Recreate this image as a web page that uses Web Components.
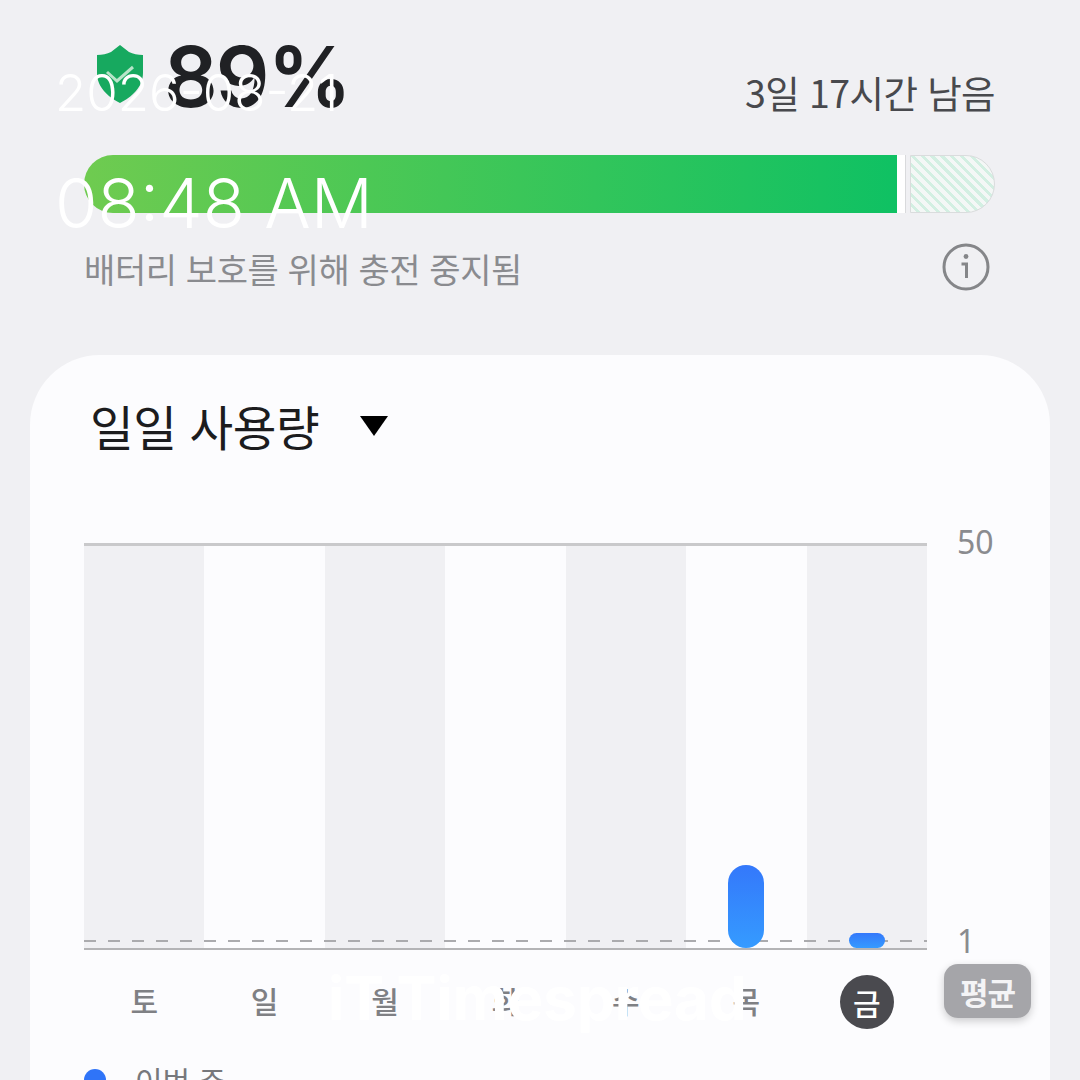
<!DOCTYPE html>
<html lang="ko">
<head>
<meta charset="utf-8">
<title>배터리</title>
<style>
  html, body { margin: 0; height: 100%; }
  body {
    width: 1080px;
    height: 1080px;
    overflow: hidden;
    background: #f0f0f3;
    font-family: "Noto Sans CJK KR", "Noto Sans", sans-serif;
    position: relative;
  }
</style>
</head>
<body>
  <battery-summary percent="89" remaining="3일 17시간 남음" note="배터리 보호를 위해 충전 중지됨"></battery-summary>
  <usage-card title="일일 사용량"></usage-card>
  <stamp-overlay date="2026-08-21" time="08:48 AM" mark="iT Timespread"></stamp-overlay>

<script>
// Battery header: level, time left, charge bar, note
class BatterySummary extends HTMLElement {
  constructor() {
    super();
    this.attachShadow({ mode: "open" });
  }

  connectedCallback() {
    this.shadowRoot.innerHTML = `
      <style>
        :host {
          display: block;
          padding: 33px 85px 0 84px;
          height: 322px;
          box-sizing: border-box;
          color: #202124;
        }
        .top {
          display: flex;
          justify-content: space-between;
          align-items: flex-end;
          height: 84px;
        }
        .level {
          display: flex;
          align-items: center;
          gap: 21px;
          padding-left: 13px;
          height: 84px;
        }
        .level svg { width: 46px; height: 58px; display: block; margin-top: -2px; }
        .pct {
          font-family: Inter, sans-serif;
          font-size: 84px;
          font-weight: 600;
          line-height: 84px;
          letter-spacing: -2px;
          padding-top: 4px;
        }
        .left {
          font-size: 37.5px;
          line-height: 46px;
          color: #48494d;
          letter-spacing: -0.6px;
          padding-bottom: 2px;
        }
        .bar {
          margin-top: 38px;
          height: 58px;
          display: flex;
        }
        .fill {
          width: 813px;
          background: linear-gradient(90deg, #6fcb50 0%, #4cc855 35%, #0fc163 100%);
          border-radius: 29px 0 0 29px;
        }
        .gap { width: 8px; background: #fff; border-right: 1px solid #d9dadc; }
        .rest {
          flex: 1;
          background: #f4f6f5 repeating-linear-gradient(45deg, #f4f7f6 0 4px, #d3efe2 4px 7px);
          border: 1px solid #dadcdd;
          border-radius: 0 29px 29px 0;
          margin-left: 4px;
        }
        .note {
          display: flex;
          justify-content: space-between;
          align-items: center;
          margin-top: 26px;
          padding-right: 5px;
        }
        .note span {
          font-size: 34px;
          line-height: 50px;
          color: #8a8b8f;
          letter-spacing: -0.4px;
          padding-top: 5px;
        }
        .note svg { width: 48px; height: 48px; display: block; }
      </style>
      <div class="top">
        <div class="level">
          <svg viewBox="0 0 46 58">
            <path d="M23 0 L32 7 Q38 10 46 10 V28 C46 42 35 52 23 58 C11 52 0 42 0 28 V10 Q8 10 14 7 Z" fill="#17a95f"/>
            <path d="M10 27 L20 36 L36 22" fill="none" stroke="#b7e4c9" stroke-width="3"/>
          </svg>
          <div class="pct">${this.getAttribute("percent")}%</div>
        </div>
        <div class="left">${this.getAttribute("remaining")}</div>
      </div>
      <div class="bar">
        <div class="fill"></div>
        <div class="gap"></div>
        <div class="rest"></div>
      </div>
      <div class="note">
        <span>${this.getAttribute("note")}</span>
        <svg viewBox="0 0 48 48">
          <circle cx="24" cy="24" r="22" fill="none" stroke="#858689" stroke-width="3"/>
          <circle cx="24" cy="13.5" r="2.4" fill="#858689"/>
          <path d="M19.5 21 H24.5 V35" fill="none" stroke="#858689" stroke-width="3"/>
        </svg>
      </div>
    `;
  }
}

// One weekday column of the chart
class DayColumn extends HTMLElement {
  constructor() {
    super();
    this.attachShadow({ mode: "open" });
  }

  connectedCallback() {
    const value = Number(this.getAttribute("value") || 0);
    const shaded = this.hasAttribute("shaded");
    this.shadowRoot.innerHTML = `
      <style>
        :host {
          display: flex;
          align-items: flex-end;
          justify-content: center;
          background: ${shaded ? "#f0f0f3" : "transparent"};
        }
        .val {
          width: 36px;
          height: ${value}px;
          border-radius: ${value > 20 ? 18 : 8}px;
          background: linear-gradient(180deg, #3478fb, #359bff);
          position: relative;
          z-index: 2;
          display: ${value ? "block" : "none"};
        }
      </style>
      <div class="val"></div>
    `;
  }
}

// Card with the weekly chart
class UsageCard extends HTMLElement {
  constructor() {
    super();
    this.attachShadow({ mode: "open" });
  }

  connectedCallback() {
    const days = ["토", "일", "월", "화", "수", "목", "금"];
    const values = [0, 0, 0, 0, 0, 83, 15];
    this.shadowRoot.innerHTML = `
      <style>
        :host {
          display: block;
          margin: 33px 30px 0;
          height: 725px;
          overflow: hidden;
          background: #fcfcfe;
          border-radius: 70px 70px 0 0;
          padding: 44px 54px 0;
          box-sizing: border-box;
        }
        .head {
          display: flex;
          align-items: center;
          gap: 41px;
          height: 54px;
          padding-left: 6px;
        }
        .head h2 {
          margin: 0;
          font-size: 47.5px;
          font-weight: 400;
          color: #1c1c1e;
          letter-spacing: -0.4px;
          line-height: 54px;
        }
        .arrow {
          width: 0; height: 0;
          border-left: 14px solid transparent;
          border-right: 14px solid transparent;
          border-top: 20px solid #000;
        }
        .chart {
          margin-top: 90px;
          display: grid;
          grid-template-columns: 843px 1fr;
          grid-template-rows: 407px;
          position: relative;
        }
        .cols {
          display: grid;
          grid-template-columns: repeat(7, 1fr);
          border-top: 3px solid #c9c9cb;
          border-bottom: 2px solid #b4b4b6;
          box-sizing: border-box;
          position: relative;
        }
        .avg {
          position: absolute;
          left: 0; right: 0; bottom: 6px;
          height: 2px;
          background: repeating-linear-gradient(90deg, #ababae 0 12px, transparent 12px 24px);
          z-index: 1;
        }
        .axis {
          display: flex;
          flex-direction: column;
          justify-content: space-between;
          padding-left: 30px;
          font-size: 32px;
          color: #8a8b8f;
          line-height: 40px;
          margin: -21px 0 -11px;
          font-family: "Noto Sans", sans-serif;
        }
        .badge {
          position: absolute;
          left: 860px;
          top: 421px;
          width: 87px;
          height: 54px;
          border-radius: 14px;
          background: #a5a5a9;
          color: #f4f4f6;
          font-size: 31px;
          font-weight: 600;
          display: flex;
          align-items: center;
          justify-content: center;
          box-shadow: 0 3px 8px rgba(0,0,0,.2);
          letter-spacing: -1px;
        }
        .days {
          display: grid;
          grid-template-columns: repeat(7, 120.43px);
          margin-top: 24px;
          height: 56px;
          align-items: center;
          justify-items: center;
          font-size: 30px;
          font-weight: 500;
          color: #7f8084;
        }
        .days span { padding-bottom: 4px; }
        .today {
          width: 54px; height: 54px;
          border-radius: 50%;
          background: #4a4a4f;
          color: #fff;
          display: flex;
          align-items: center;
          justify-content: center;
        }
        .legend {
          display: flex;
          align-items: center;
          gap: 29px;
          margin-top: 30px;
          font-size: 30px;
          color: #77787c;
          line-height: 40px;
        }
        .dot { width: 22px; height: 22px; border-radius: 50%; background: #2f74f8; }
      </style>
      <div class="head"><h2>${this.getAttribute("title")}</h2><div class="arrow"></div></div>
      <div class="chart">
        <div class="cols">
          ${values.map((v, i) => `<day-column value="${v}" ${i % 2 === 0 ? "shaded" : ""}></day-column>`).join("")}
          <div class="avg"></div>
        </div>
        <div class="axis"><span>50</span><span>1</span></div>
        <div class="badge">평균</div>
      </div>
      <div class="days">
        ${days.map((d, i) => (i === 6 ? `<div class="today">${d}</div>` : `<span>${d}</span>`)).join("")}
      </div>
      <div class="legend"><div class="dot"></div><span>이번 주</span></div>
    `;
  }
}

// Date, time and brand stamped over the screenshot
class StampOverlay extends HTMLElement {
  constructor() {
    super();
    this.attachShadow({ mode: "open" });
  }

  connectedCallback() {
    this.shadowRoot.innerHTML = `
      <style>
        :host {
          position: absolute;
          inset: 0;
          display: block;
          pointer-events: none;
          color: #fff;
          font-family: Inter, sans-serif;
          z-index: 5;
        }
        div { position: absolute; white-space: nowrap; }
        .date { left: 55px; top: 63px; font-size: 51px; line-height: 60px; font-weight: 300; }
        .time { left: 55px; top: 163px; font-size: 69px; line-height: 80px; font-weight: 300; }
        .mark { left: 328px; top: 963px; font-size: 60px; line-height: 70px; font-weight: 700; word-spacing: -2px; }
      </style>
      <div class="date">${this.getAttribute("date")}</div>
      <div class="time">${this.getAttribute("time")}</div>
      <div class="mark">${this.getAttribute("mark")}</div>
    `;
  }
}

customElements.define("battery-summary", BatterySummary);
customElements.define("day-column", DayColumn);
customElements.define("usage-card", UsageCard);
customElements.define("stamp-overlay", StampOverlay);
</script>
</body>
</html>
